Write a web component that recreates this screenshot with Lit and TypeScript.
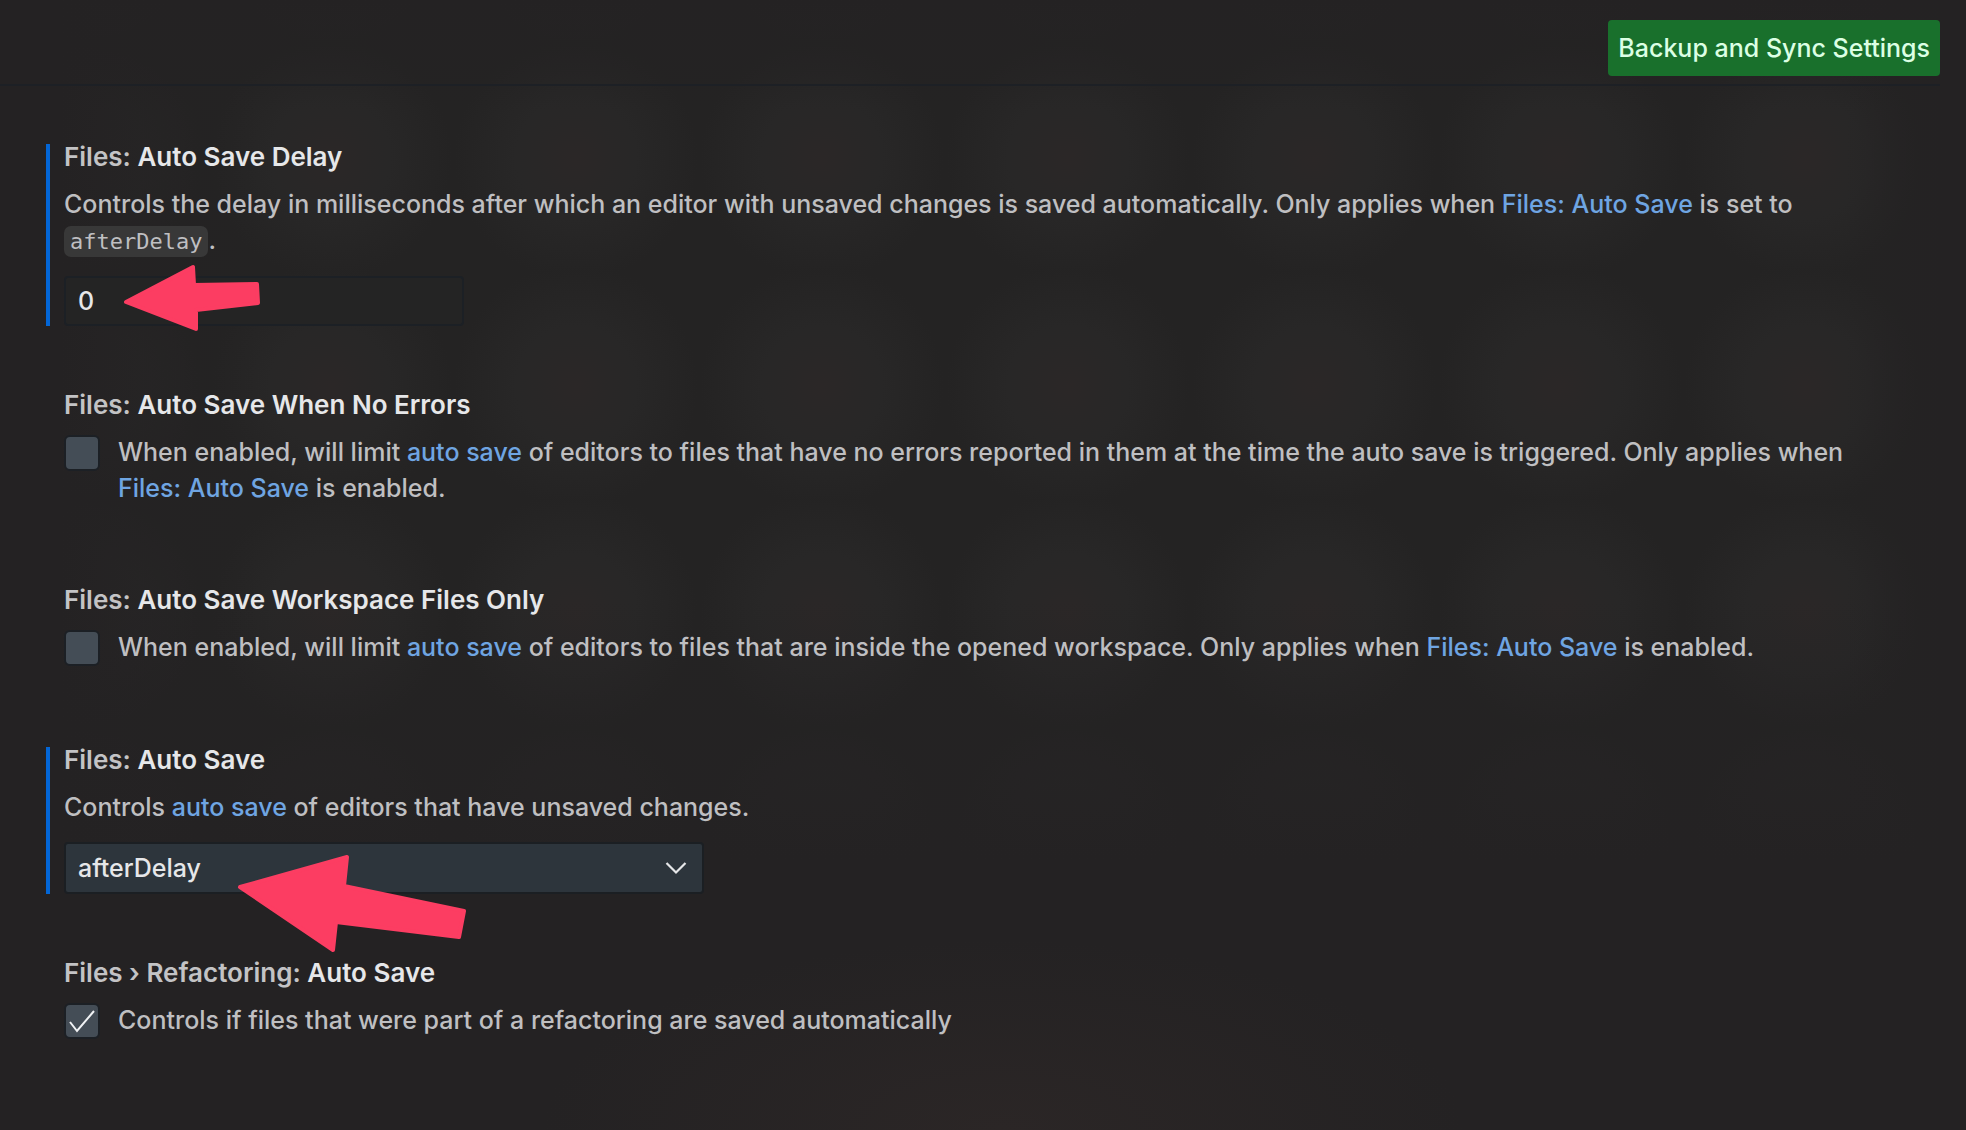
import { LitElement, html, css, svg, nothing, TemplateResult } from "lit";
import { customElement, property } from "lit/decorators.js";

const link = (text: string) => html`<a href="#auto-save">${text}</a>`;

@customElement("setting-item")
class SettingItem extends LitElement {
  @property() category = "";
  @property() name = "";
  @property() kind: "number" | "select" | "check" = "check";
  @property() value = "";
  @property({ type: Boolean }) checked = false;
  @property({ type: Boolean }) modified = false;
  @property({ attribute: false }) description: TemplateResult | string = "";

  static styles = css`
    :host {
      display: block;
      position: relative;
    }
    * {
      box-sizing: border-box;
    }
    .item {
      padding-left: 14px;
      border-left: 4px solid transparent;
    }
    .modified {
      border-left-color: #0366d6;
    }
    .check {
      padding-bottom: 15px;
    }
    .title {
      margin: 0 0 16px;
      font-size: 26px;
      line-height: 26px;
      font-weight: 600;
      color: #c3c3c5;
    }
    .name {
      color: #e6e7e9;
    }
    .text {
      display: block;
      font-size: 25px;
      font-weight: 475;
      line-height: 36px;
    }
    a {
      color: #6fa5e2;
      text-decoration: none;
    }
    code {
      padding: 3px 6px;
      border-radius: 7px;
      background: #383838;
      font-family: "DejaVu Sans Mono", monospace;
      font-size: 22px;
      line-height: 26px;
    }
    .row {
      display: flex;
      align-items: flex-start;
      gap: 18px;
    }
    .box {
      display: grid;
      flex: none;
      margin-top: 1px;
    }
    .box > * {
      grid-area: 1 / 1;
    }
    .box input {
      appearance: none;
      width: 36px;
      height: 36px;
      margin: 0;
      border: 2px solid #1c2025;
      border-radius: 6px;
      background: #444d56;
    }
    .tick {
      width: 36px;
      height: 36px;
      pointer-events: none;
    }
    .field {
      display: block;
      width: 400px;
      max-width: 100%;
      height: 50px;
      margin-top: 18px;
      padding: 0 12px;
      border: 2px solid #1c2025;
      border-radius: 4px;
      background: #242424;
      color: #e6e7e9;
      font: inherit;
      font-size: 25px;
      font-weight: 475;
    }
    .picker {
      display: grid;
      align-items: center;
      width: 640px;
      max-width: 100%;
      margin-top: 17px;
    }
    .picker > * {
      grid-area: 1 / 1;
    }
    select {
      appearance: none;
      width: 100%;
      height: 52px;
      padding: 0 12px;
      border: 2px solid #1b1f23;
      border-radius: 4px;
      background: #2d353c;
      color: #e6e7e9;
      font: inherit;
      font-size: 25px;
      font-weight: 475;
    }
    .chevron {
      justify-self: end;
      width: 24px;
      height: 24px;
      margin-right: 16px;
      pointer-events: none;
    }
  `;

  private checkRow() {
    return html`<div class="row">
      <span class="box">
        <input id="control" type="checkbox" .checked=${this.checked} />
        ${this.checked
          ? html`<svg class="tick" viewBox="0 0 36 36" aria-hidden="true">
              <path d="M6 19 L13 28 L30 8" fill="none" stroke="#f0f2f4" stroke-width="2" />
            </svg>`
          : nothing}
      </span>
      <label class="text" for="control">${this.description}</label>
    </div>`;
  }

  private control() {
    if (this.kind === "number") {
      return html`<input id="control" class="field" type="text" inputmode="numeric" .value=${this.value} />`;
    }
    return html`<div class="picker">
      <select id="control">
        <option>${this.value}</option>
      </select>
      <svg class="chevron" viewBox="0 0 24 24" aria-hidden="true">
        <path d="M2.500 7 L12 16.500 L21.500 7" fill="none" stroke="#e6e7e9" stroke-width="2.200" />
      </svg>
    </div>`;
  }

  render() {
    return html`<section class="item ${this.kind} ${this.modified ? "modified" : ""}">
      <h2 class="title">${this.category}: <span class="name">${this.name}</span></h2>
      ${this.kind === "check"
        ? this.checkRow()
        : html`<label class="text" for="control">${this.description}</label>${this.control()}`}
      <slot></slot>
    </section>`;
  }
}

const arrow = (cls: string, w: number, h: number, points: string) => html`<svg
  class="arrow ${cls}"
  width=${w}
  height=${h}
  viewBox="0 0 ${w} ${h}"
  aria-hidden="true"
>
  ${svg`<polygon points=${points} fill="#fc3d62" stroke="#fc3d62" stroke-width="4" stroke-linejoin="round" />`}
</svg>`;

@customElement("app-root")
class AppRoot extends LitElement {
  static styles = css`
    :host {
      display: block;
      min-height: 100vh;
      box-sizing: border-box;
      font-family: Inter, "Noto Sans", sans-serif;
      color: #bfbfc1;
      background:
        radial-gradient(ellipse 460px 190px at 51% 100%, #2b2626, transparent),
        linear-gradient(90deg, #242223 60px, transparent 260px calc(100% - 120px), #242223 calc(100% - 20px)),
        linear-gradient(#242223, transparent 110px 600px, #242223 860px),
        radial-gradient(circle at center, #2b2727 0, #292727 34px, #282727 60px, #242323 122px) 207px 44px / 246px 228px,
        #242223;
    }
    header {
      display: flex;
      justify-content: flex-end;
      margin-right: 26px;
      padding: 20px 0 8px;
      border-bottom: 2px solid #1d2025;
    }
    button {
      height: 56px;
      padding: 0 10px;
      border: 0;
      border-radius: 4px;
      background: #19702c;
      color: #dcffe4;
      font: inherit;
      font-size: 25px;
      font-weight: 475;
      white-space: nowrap;
    }
    main {
      display: grid;
      gap: 66px;
      padding: 58px 84px 58px 46px;
    }
    .arrow {
      position: absolute;
      pointer-events: none;
    }
    .delay {
      left: 76px;
      top: 118px;
    }
    .mode {
      left: 190px;
      top: 106px;
    }
  `;

  render() {
    return html`
      <header><button type="button">Backup and Sync Settings</button></header>
      <main>
        <setting-item
          category="Files"
          name="Auto Save Delay"
          kind="number"
          value="0"
          modified
          .description=${html`Controls the delay in milliseconds after which an editor with unsaved changes is saved
            automatically. Only applies when ${link("Files: Auto Save")} is set to <code>afterDelay</code>.`}
          >${arrow("delay", 142, 72, "4,40 71,5 72,23 135,22 136,41 74,48 74,67")}</setting-item
        >
        <setting-item
          category="Files"
          name="Auto Save When No Errors"
          .description=${html`When enabled, will limit ${link("auto save")} of editors to files that have no errors
            reported in them at the time the auto save is triggered. Only applies when ${link("Files: Auto Save")} is
            enabled.`}
        ></setting-item>
        <setting-item
          category="Files"
          name="Auto Save Workspace Files Only"
          .description=${html`When enabled, will limit ${link("auto save")} of editors to files that are inside the
            opened workspace. Only applies when ${link("Files: Auto Save")} is enabled.`}
        ></setting-item>
        <setting-item
          category="Files"
          name="Auto Save"
          kind="select"
          value="afterDelay"
          modified
          .description=${html`Controls ${link("auto save")} of editors that have unsaved changes.`}
          >${arrow("mode", 234, 104, "4,34 111,4 108,33 228,58 223,84 100,69 97,97")}</setting-item
        >
        <setting-item
          category="Files › Refactoring"
          name="Auto Save"
          checked
          .description=${"Controls if files that were part of a refactoring are saved automatically"}
        ></setting-item>
      </main>
    `;
  }
}
